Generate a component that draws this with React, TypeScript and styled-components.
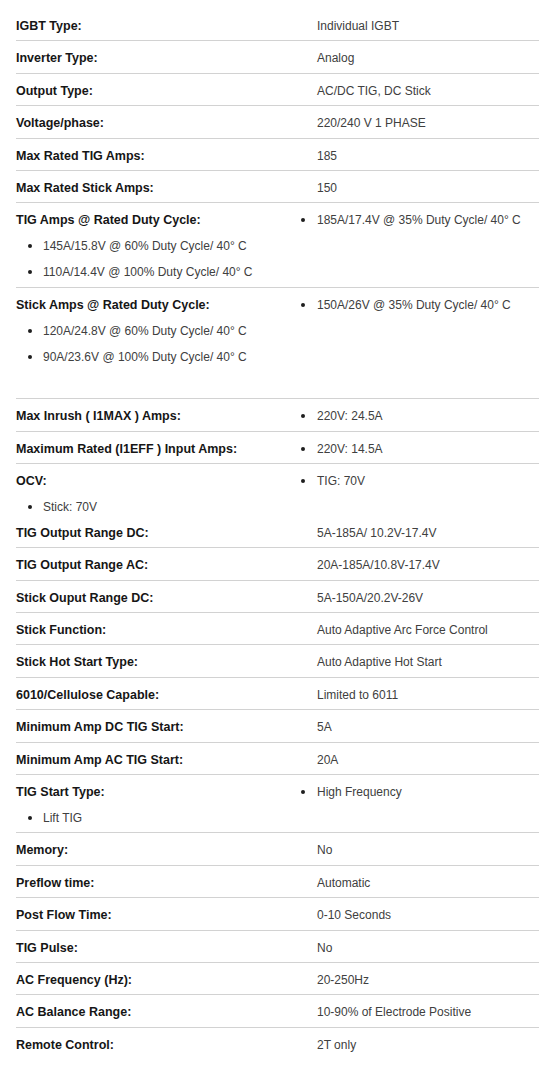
import React from "react";
import styled, { createGlobalStyle } from "styled-components";

const Global = createGlobalStyle`
  html, body { margin: 0; padding: 0; background: #ffffff; }
  body { font-family: "Liberation Sans", Arial, sans-serif; }
`;

const Sheet = styled.div`
  padding: 9px 0 0 16px;
`;

const Row = styled.div<{ $last?: boolean }>`
  padding: 4px 0 1.4px;
  border-bottom: 1px solid ${(p) => (p.$last ? "transparent" : "#d2d2d2")};
`;

const Line = styled.div<{ $tall?: boolean }>`
  display: grid;
  grid-template-columns: 285px 1fr;
  height: ${(p) => (p.$tall ? "27px" : "26px")};
  align-items: center;
`;

const Label = styled.div`
  font-weight: 700;
  font-size: 12.5px;
  color: #161616;
  white-space: nowrap;
`;

const Value = styled.div`
  font-size: 12px;
  color: #404040;
  padding-left: 16px;
  white-space: nowrap;
`;

const Bullet = styled.div<{ $indent?: number; $gap?: number }>`
  display: flex;
  align-items: center;
  gap: ${(p) => p.$gap ?? 12}px;
  padding-left: ${(p) => p.$indent ?? 0}px;
  font-size: 12px;
  color: #404040;
  white-space: nowrap;
  &::before {
    content: "";
    width: 4px;
    height: 4px;
    border-radius: 50%;
    background: #1e1e1e;
    flex: none;
  }
`;

type Cell = { kind: "label" | "text" | "bullet"; text: string };
type LineData = { left?: Cell; right?: Cell; tall?: boolean };

const L = (text: string): Cell => ({ kind: "label", text });
const T = (text: string): Cell => ({ kind: "text", text });
const B = (text: string): Cell => ({ kind: "bullet", text });

const simple = (label: string, value: string): LineData[] => [{ left: L(label), right: T(value) }];

const rows: LineData[][] = [
  simple("IGBT Type:", "Individual IGBT"),
  simple("Inverter Type:", "Analog"),
  simple("Output Type:", "AC/DC TIG, DC Stick"),
  simple("Voltage/phase:", "220/240 V 1 PHASE"),
  simple("Max Rated TIG Amps:", "185"),
  simple("Max Rated Stick Amps:", "150"),
  [
    { left: L("TIG Amps @ Rated Duty Cycle:"), right: B("185A/17.4V @ 35% Duty Cycle/ 40° C") },
    { left: B("145A/15.8V @ 60% Duty Cycle/ 40° C") },
    { left: B("110A/14.4V @ 100% Duty Cycle/ 40° C") },
  ],
  [
    { left: L("Stick Amps @ Rated Duty Cycle:"), right: B("150A/26V @ 35% Duty Cycle/ 40° C") },
    { left: B("120A/24.8V @ 60% Duty Cycle/ 40° C") },
    { left: B("90A/23.6V @ 100% Duty Cycle/ 40° C") },
    { tall: true },
  ],
  [{ left: L("Max Inrush ( I1MAX ) Amps:"), right: B("220V: 24.5A") }],
  [{ left: L("Maximum Rated (I1EFF ) Input Amps:"), right: B("220V: 14.5A") }],
  [
    { left: L("OCV:"), right: B("TIG: 70V") },
    { left: B("Stick: 70V") },
    { left: L("TIG Output Range DC:"), right: T("5A-185A/ 10.2V-17.4V") },
  ],
  simple("TIG Output Range AC:", "20A-185A/10.8V-17.4V"),
  simple("Stick Ouput Range DC:", "5A-150A/20.2V-26V"),
  simple("Stick Function:", "Auto Adaptive Arc Force Control"),
  simple("Stick Hot Start Type:", "Auto Adaptive Hot Start"),
  simple("6010/Cellulose Capable:", "Limited to 6011"),
  simple("Minimum Amp DC TIG Start:", "5A"),
  simple("Minimum Amp AC TIG Start:", "20A"),
  [
    { left: L("TIG Start Type:"), right: B("High Frequency") },
    { left: B("Lift TIG") },
  ],
  simple("Memory:", "No"),
  simple("Preflow time:", "Automatic"),
  simple("Post Flow Time:", "0-10 Seconds"),
  simple("TIG Pulse:", "No"),
  simple("AC Frequency (Hz):", "20-250Hz"),
  simple("AC Balance Range:", "10-90% of Electrode Positive"),
  simple("Remote Control:", "2T only"),
];

function renderCell(c: Cell | undefined, side: "left" | "right") {
  if (!c) return <div />;
  if (c.kind === "label") return <Label>{c.text}</Label>;
  if (c.kind === "text") return <Value>{c.text}</Value>;
  return side === "left" ? (
    <Bullet $indent={12} $gap={11}>{c.text}</Bullet>
  ) : (
    <Bullet $gap={12}>{c.text}</Bullet>
  );
}

export default function App() {
  return (
    <>
      <Global />
      <Sheet>
        {rows.map((lines, i) => (
          <Row key={i} $last={i === rows.length - 1}>
            {lines.map((ln, j) => (
              <Line key={j} $tall={ln.tall}>
                {renderCell(ln.left, "left")}
                {renderCell(ln.right, "right")}
              </Line>
            ))}
          </Row>
        ))}
      </Sheet>
    </>
  );
}
